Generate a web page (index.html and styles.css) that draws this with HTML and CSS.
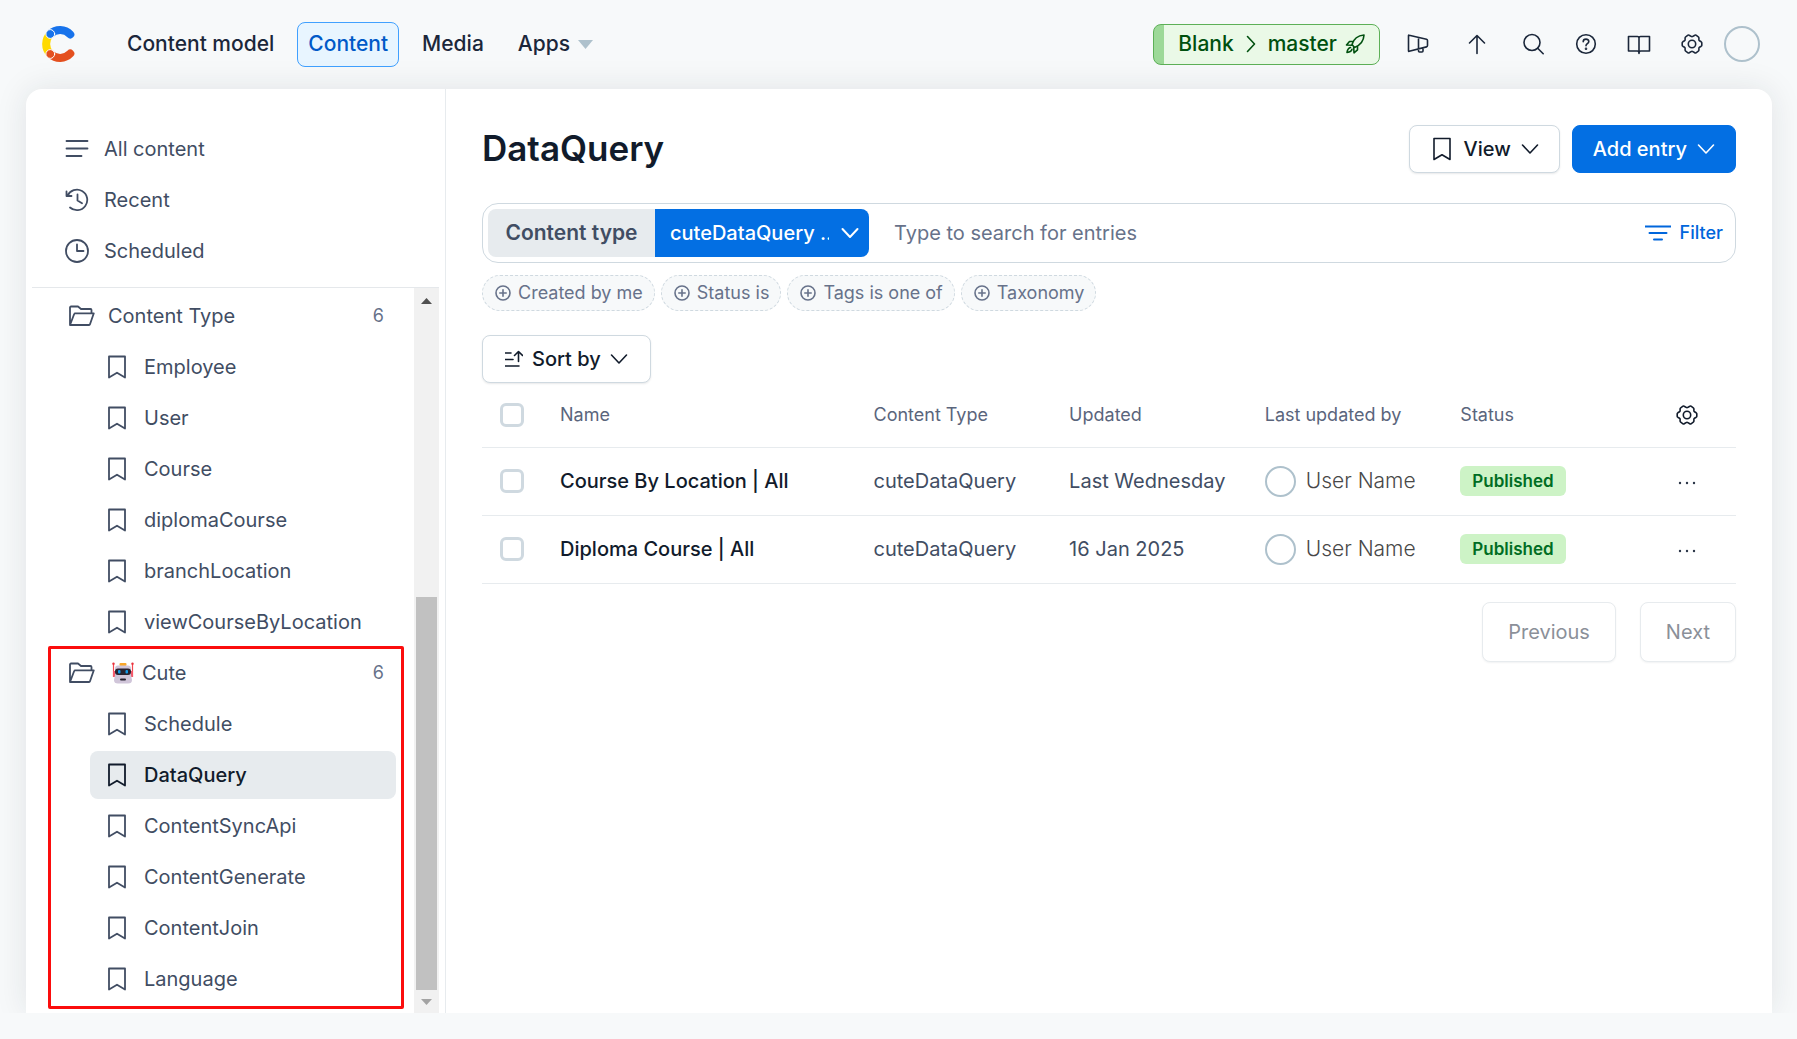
FILE: index.html
```html
<!DOCTYPE html>
<html lang="en">
<head>
<meta charset="utf-8">
<title>DataQuery - Content</title>
<link rel="stylesheet" href="styles.css">
</head>
<body>
<svg class="sprite" aria-hidden="true">
  <symbol id="i-bookmark" viewBox="0 0 24 24"><path d="M4 1.500h16v21l-8-4.800-8 4.800z"/></symbol>
  <symbol id="i-folder" viewBox="0 0 26 24"><path d="M1 21V3.500a1 1 0 0 1 1-1h7l3 2.500h9.500a1 1 0 0 1 1 1v3M1 21l4.200-11a1 1 0 0 1 1-.7h18.600l-3.800 11a1 1 0 0 1-1 .7z"/></symbol>
  <symbol id="i-down" viewBox="0 0 18 18"><path d="M1.500 5l7.500 8 7.500-8"/></symbol>
  <symbol id="i-plus" viewBox="0 0 16 16"><circle cx="8" cy="8" r="7"/><path d="M8 4.800v6.400M4.800 8h6.400"/></symbol>
  <symbol id="i-gear" viewBox="0 0 24 24"><circle cx="12" cy="12" r="3.700"/><path d="M21.200 9.800q.6.400.6 1v2.400q0 .6-.6 1l-1.700 1q-.6.400-.6 1v1.900q0 .7-.6 1.100l-2.300 1.600q-.6.400-1.200 0l-1.900-1.200q-.9-.5-1.800 0l-1.900 1.200q-.6.400-1.200 0l-2.300-1.600q-.6-.4-.6-1.100v-1.900q0-.6-.6-1l-1.700-1q-.6-.4-.6-1v-2.400q0-.6.6-1l1.700-1q.6-.4.6-1V5.900q0-.7.600-1.100L8 3.200q.6-.4 1.200 0l1.900 1.200q.9.500 1.800 0l1.900-1.200q.6-.4 1.200 0l2.300 1.600q.6.400.6 1.100v1.900q0 .6.600 1z"/></symbol>
</svg>

<header class="topbar">
  <a class="logo" href="#" aria-label="Home">
    <svg width="33" height="36" viewBox="0 0 33 36" fill="none" stroke-width="8" stroke-linecap="round">
      <path d="M8.300 8A14.100 14.100 0 0 0 8.300 28" stroke="#ffda00"/>
      <path d="M8.300 8a14.100 14.100 0 0 1 20 .4" stroke="#1773eb"/>
      <path d="M8.300 28a14.100 14.100 0 0 0 20-.4" stroke="#e4501f"/>
      <circle cx="8.300" cy="8" r="4.400" fill="#1773eb" stroke="#fff" stroke-width="1"/>
      <circle cx="8.300" cy="28" r="4.400" fill="#e4501f" stroke="#fff" stroke-width="1"/>
    </svg>
  </a>
  <nav class="main-nav" aria-label="Main">
    <a class="nav-link" href="#">Content model</a>
    <a class="nav-link nav-link-active" href="#" aria-current="page">Content</a>
    <a class="nav-link" href="#">Media</a>
    <a class="nav-link" href="#">Apps <svg width="15" height="9" viewBox="0 0 15 9"><path d="M0 0h15L7.500 9z" fill="#aec1cc"/></svg></a>
  </nav>
  <button class="env" type="button">
    <span>Blank</span>
    <svg class="icon" width="18" height="18" viewBox="0 0 18 18"><path d="M5.500 1.500L12.500 9l-7 7.500"/></svg>
    <span>master</span>
    <svg class="icon" width="20" height="20" viewBox="0 0 20 20"><path d="M7 10.500C8.500 5.500 12.500 1.500 19 1c-.3 6.500-4.500 10.500-9.500 12.500zM8.500 7.500H4.500L1.500 11l5.500.3M12.500 12v3.800L9 18.800l-.3-5.500M5.500 13.500c-2 .3-3 2-3.500 5 2.800-.3 4.700-1.300 5-3.300"/></svg>
  </button>
  <div class="actions">
    <button class="action action-wide" type="button" aria-label="Announcements"><svg class="icon" width="24" height="24" viewBox="0 0 24 24"><path d="M2.500 3.700q0-.7.700-.5L20.500 7.300q1 .3 1 1.300v5q0 1-1 1.300L3.200 19.300q-.7.200-.7-.5zM12.500 5.500v11.300M12.500 16.800V19q0 1 1 1h2.500q1 0 1-1v-3.200"/></svg></button>
    <button class="action action-wide" type="button" aria-label="Upgrade"><svg class="icon" width="24" height="24" viewBox="0 0 24 24"><path d="M12 21.500v-18M4.500 11L12 3.500l7.500 7.500"/></svg></button>
    <button class="action" type="button" aria-label="Search"><svg class="icon" width="24" height="24" viewBox="0 0 24 24"><circle cx="11" cy="10.500" r="8"/><path d="M16.700 16.200l5.500 5.500"/></svg></button>
    <button class="action" type="button" aria-label="Help"><svg class="icon" width="24" height="24" viewBox="0 0 24 24"><circle cx="12" cy="12" r="9.300"/><path d="M9.200 9.700c0-3.500 5.600-3.300 5.600-.2 0 2.200-2.800 2.200-2.800 4.300"/><circle cx="12" cy="16.700" r=".5"/></svg></button>
    <button class="action" type="button" aria-label="Docs"><svg class="icon" width="24" height="24" viewBox="0 0 24 24"><path d="M12 6q0-1.500 1.500-1.500h9V19h-9Q12 19 12 21.500 12 19 10.500 19h-9V4.500h9Q12 4.500 12 6v15"/></svg></button>
    <button class="action" type="button" aria-label="Settings"><svg class="icon" width="24" height="24"><use href="#i-gear"/></svg></button>
    <button class="avatar avatar-large" type="button" aria-label="Account"></button>
  </div>
</header>

<div class="panel">
  <aside class="sidebar">
    <nav class="quick" aria-label="Content">
      <a class="quick-link" href="#"><svg class="icon" width="24" height="24" viewBox="0 0 24 24"><path d="M1.500 4h21M1.500 11.500h21M1.500 19h15"/></svg>All content</a>
      <a class="quick-link" href="#"><svg class="icon" width="24" height="24" viewBox="0 0 24 24"><path d="M1.500 3.500V8h5M2.500 7.800A10.300 10.300 0 1 1 5 19.500M12.500 6.500v6l4.500 2.700"/></svg>Recent</a>
      <a class="quick-link" href="#"><svg class="icon" width="24" height="24" viewBox="0 0 24 24"><circle cx="12" cy="12" r="11"/><path d="M12 5.500V12h6.500"/></svg>Scheduled</a>
    </nav>
    <div class="views">
      <div class="tree">
        <section class="group">
          <a class="folder" href="#"><svg class="icon" width="26" height="24"><use href="#i-folder"/></svg><span class="folder-name">Content Type</span><span class="count">6</span></a>
          <a class="view" href="#"><svg class="icon" width="24" height="24"><use href="#i-bookmark"/></svg>Employee</a>
          <a class="view" href="#"><svg class="icon" width="24" height="24"><use href="#i-bookmark"/></svg>User</a>
          <a class="view" href="#"><svg class="icon" width="24" height="24"><use href="#i-bookmark"/></svg>Course</a>
          <a class="view" href="#"><svg class="icon" width="24" height="24"><use href="#i-bookmark"/></svg>diplomaCourse</a>
          <a class="view" href="#"><svg class="icon" width="24" height="24"><use href="#i-bookmark"/></svg>branchLocation</a>
          <a class="view" href="#"><svg class="icon" width="24" height="24"><use href="#i-bookmark"/></svg>viewCourseByLocation</a>
        </section>
        <section class="group group-marked">
          <a class="folder" href="#"><svg class="icon" width="26" height="24"><use href="#i-folder"/></svg>
            <svg class="robot" width="28" height="22" viewBox="0 0 28 22">
              <path d="M4.500 1.500V15M23.500 1.500V15" stroke="#f4464e" stroke-width="1.200"/>
              <path d="M4 9h2.500v6H4zM21.500 9H24v6h-2.500z" fill="#f4596b"/>
              <circle cx="4.500" cy="1.700" r="1.200" fill="#e8343f"/><circle cx="23.500" cy="1.700" r="1.200" fill="#e8343f"/>
              <rect x="10.500" y="1" width="7" height="3" rx="1" fill="#f9a72b"/>
              <path d="M9 3.500h10q3 0 3 3V13l1 5q0 3.500-4 3.500H9q-4 0-4-3.500l1-5V6.500q0-3 3-3z" fill="#d0c5d9"/>
              <rect x="6" y="6.500" width="16" height="6.500" rx="3" fill="#272230"/>
              <rect x="9" y="8" width="2.500" height="3.500" rx="1" fill="#139be8"/><rect x="16.500" y="8" width="2.500" height="3.500" rx="1" fill="#139be8"/>
              <rect x="11" y="16.500" width="6" height="2" rx="1" fill="#272230"/>
            </svg>
            <span class="folder-name">Cute</span><span class="count">6</span></a>
          <a class="view" href="#"><svg class="icon" width="24" height="24"><use href="#i-bookmark"/></svg>Schedule</a>
          <a class="view view-active" href="#" aria-current="page"><svg class="icon" width="24" height="24"><use href="#i-bookmark"/></svg>DataQuery</a>
          <a class="view" href="#"><svg class="icon" width="24" height="24"><use href="#i-bookmark"/></svg>ContentSyncApi</a>
          <a class="view" href="#"><svg class="icon" width="24" height="24"><use href="#i-bookmark"/></svg>ContentGenerate</a>
          <a class="view" href="#"><svg class="icon" width="24" height="24"><use href="#i-bookmark"/></svg>ContentJoin</a>
          <a class="view" href="#"><svg class="icon" width="24" height="24"><use href="#i-bookmark"/></svg>Language</a>
        </section>
      </div>
      <div class="scrollbar" aria-hidden="true">
        <svg width="11" height="6" viewBox="0 0 11 6"><path d="M0 6L5.500 0 11 6z" fill="#505050"/></svg>
        <div class="scroll-thumb"></div>
        <svg width="11" height="6" viewBox="0 0 11 6"><path d="M0 0l5.500 6L11 0z" fill="#a3a3a3"/></svg>
      </div>
    </div>
  </aside>

  <main class="main">
    <div class="title-row">
      <h1 class="title">DataQuery</h1>
      <button class="button" type="button"><svg class="icon" width="24" height="24"><use href="#i-bookmark"/></svg>View<svg class="icon" width="18" height="18"><use href="#i-down"/></svg></button>
      <button class="button button-primary" type="button">Add entry<svg class="icon" width="18" height="18"><use href="#i-down"/></svg></button>
    </div>

    <form class="search">
      <label class="search-label" for="type">Content type</label>
      <div class="select-wrap">
        <select class="select" id="type"><option>cuteDataQuery ..</option></select>
        <svg class="icon select-arrow" width="18" height="18"><use href="#i-down"/></svg>
      </div>
      <input class="search-input" type="text" placeholder="Type to search for entries" aria-label="Search for entries">
      <button class="filter" type="button"><svg class="icon" width="26" height="18" viewBox="0 0 26 18"><path d="M0 2.500h26M4.500 9h17M9 15.500h8"/></svg>Filter</button>
    </form>

    <div class="pills">
      <button class="pill" type="button"><svg class="icon" width="16" height="16"><use href="#i-plus"/></svg>Created by me</button>
      <button class="pill" type="button"><svg class="icon" width="16" height="16"><use href="#i-plus"/></svg>Status is</button>
      <button class="pill" type="button"><svg class="icon" width="16" height="16"><use href="#i-plus"/></svg>Tags is one of</button>
      <button class="pill" type="button"><svg class="icon" width="16" height="16"><use href="#i-plus"/></svg>Taxonomy</button>
    </div>

    <button class="button button-sort" type="button"><svg class="icon" width="18" height="18" viewBox="0 0 18 18"><path d="M0 3h6M0 9.500h8M0 16h14M13.500 11.500V2M9.500 5.500l4-4 4 4"/></svg>Sort by<svg class="icon" width="18" height="18"><use href="#i-down"/></svg></button>

    <table class="entries">
      <colgroup><col class="col-check"><col class="col-name"><col class="col-data"><col class="col-data"><col class="col-data"><col class="col-data"><col></colgroup>
      <thead>
        <tr>
          <th><input class="check" type="checkbox" aria-label="Select all"></th>
          <th>Name</th><th>Content Type</th><th>Updated</th><th>Last updated by</th><th>Status</th>
          <th class="cell-menu"><button class="plain" type="button" aria-label="Columns"><svg class="icon" width="24" height="24"><use href="#i-gear"/></svg></button></th>
        </tr>
      </thead>
      <tbody>
        <tr>
          <td><input class="check" type="checkbox" aria-label="Select Course By Location"></td>
          <td class="cell-name">Course By Location | All</td><td>cuteDataQuery</td><td>Last Wednesday</td>
          <td><div class="user"><span class="avatar"></span>User Name</div></td>
          <td><span class="badge">Published</span></td>
          <td class="cell-menu"><button class="plain" type="button" aria-label="Entry actions"><svg width="18" height="18" viewBox="0 0 18 18" fill="#2c3648"><circle cx="2" cy="9" r="1.200"/><circle cx="9" cy="9" r="1.200"/><circle cx="16" cy="9" r="1.200"/></svg></button></td>
        </tr>
        <tr>
          <td><input class="check" type="checkbox" aria-label="Select Diploma Course"></td>
          <td class="cell-name">Diploma Course | All</td><td>cuteDataQuery</td><td>16 Jan 2025</td>
          <td><div class="user"><span class="avatar"></span>User Name</div></td>
          <td><span class="badge">Published</span></td>
          <td class="cell-menu"><button class="plain" type="button" aria-label="Entry actions"><svg width="18" height="18" viewBox="0 0 18 18" fill="#2c3648"><circle cx="2" cy="9" r="1.200"/><circle cx="9" cy="9" r="1.200"/><circle cx="16" cy="9" r="1.200"/></svg></button></td>
        </tr>
      </tbody>
    </table>

    <div class="pager">
      <button class="button button-page" type="button" disabled>Previous</button>
      <button class="button button-page" type="button" disabled>Next</button>
    </div>
  </main>
</div>
</body>
</html>
```
FILE: styles.css
```css
*, *::before, *::after { box-sizing: border-box; }

body {
  margin: 0;
  min-height: 100vh;
  display: flex;
  flex-direction: column;
  background: #f7f9fa;
  color: #414d63;
  font-family: Inter, "Liberation Sans", sans-serif;
  font-size: 20px;
  line-height: 24px;
}

a { color: inherit; text-decoration: none; }
button, input, select { font: inherit; color: inherit; }
button { padding: 0; border: 0; background: none; white-space: nowrap; }
svg { display: block; flex: none; }

.sprite { position: absolute; width: 0; height: 0; }
.icon {
  fill: none;
  stroke: currentColor;
  stroke-width: 1.6;
  stroke-linecap: round;
  stroke-linejoin: round;
}

/* Top bar */
.topbar {
  display: flex;
  align-items: center;
  height: 89px;
  padding: 0 37px 1px 42px;
  color: #1b273a;
  font-size: 21px;
}
.main-nav {
  display: flex;
  gap: 12px;
  margin: 0 auto 0 41px;
  font-weight: 500;
}
.nav-link {
  display: flex;
  align-items: center;
  gap: 8px;
  height: 45px;
  padding: 0 10px;
  border: 1px solid transparent;
  border-radius: 8px;
}
.nav-link-active {
  border-color: #40a0ff;
  background: #e8f5ff;
  color: #0059c8;
}
.env {
  display: flex;
  align-items: center;
  gap: 8px;
  height: 41px;
  margin-right: 8px;
  padding: 0 14px 0 24px;
  border: 1px solid #5db057;
  border-radius: 8px;
  background: linear-gradient(to right, #9dd998 10px, #eaf9e7 10px);
  color: #00500f;
  font-weight: 500;
}
.actions { display: flex; align-items: center; }
.action { display: flex; justify-content: center; width: 53px; }
.action-wide { width: 59px; }
.avatar {
  flex: none;
  width: 31px;
  height: 31px;
  border: 2px solid #aec1cc;
  border-radius: 50%;
}
.avatar-large { width: 36px; height: 36px; margin-left: 6px; }

/* Page panel */
.panel {
  flex: 1;
  display: flex;
  margin: 0 25px 26px 26px;
  border-radius: 16px 16px 0 0;
  background: #fff;
  box-shadow: 0 0 32px rgba(25, 37, 50, 0.1);
  clip-path: inset(-40px -40px 0 -40px);
}

/* Sidebar */
.sidebar {
  flex: none;
  display: flex;
  flex-direction: column;
  width: 420px;
  padding: 36px 6px 0;
  border-right: 1px solid #e7ebee;
}
.sidebar .icon { stroke-width: 1.8; }
.quick {
  display: flex;
  flex-direction: column;
  gap: 3px;
  padding-bottom: 12px;
  border-bottom: 1px solid #e5e8eb;
}
.quick-link {
  display: flex;
  align-items: center;
  gap: 15px;
  height: 48px;
  padding-left: 33px;
}
.views { flex: 1; display: flex; }
.tree { flex: 1; padding: 4px 10px 10px 16px; }
.group {
  display: flex;
  flex-direction: column;
  gap: 3px;
  margin-bottom: 3px;
}
.group-marked { position: relative; margin-bottom: 0; }
.group-marked::after {
  content: "";
  position: absolute;
  inset: -3px 0 -6px;
  border: 3px solid #fb0d0d;
  border-radius: 2px;
  pointer-events: none;
}
.folder {
  display: flex;
  align-items: center;
  height: 48px;
  padding: 0 20px 0 21px;
}
.folder-name { margin-left: 13px; }
.robot { margin-left: 14px; }
.robot + .folder-name { margin-left: 5px; }
.count { margin-left: auto; color: #67728a; font-size: 18px; }
.view {
  display: flex;
  align-items: center;
  gap: 15px;
  height: 48px;
  margin: 0 8px 0 42px;
  padding-left: 15px;
  border-radius: 8px;
}
.view-active { background: #e7ebee; color: #111b2b; font-weight: 500; }
.scrollbar {
  display: flex;
  flex-direction: column;
  align-items: center;
  justify-content: space-between;
  width: 25px;
  padding: 10px 2px 8px;
  background: #f1f1f1;
}
.scroll-thumb {
  width: 21px;
  height: 393px;
  margin: auto 0 9px;
  background: #c1c1c1;
}

/* Main column */
.main {
  flex: 1;
  display: flex;
  flex-direction: column;
  min-width: 0;
  padding: 36px;
}
.title-row { display: flex; align-items: center; gap: 12px; height: 48px; }
.title {
  margin: 0 auto 0 0;
  padding-bottom: 2px;
  color: #111b2b;
  font-size: 35px;
  font-weight: 600;
  line-height: 46px;
}
.button {
  display: flex;
  align-items: center;
  justify-content: center;
  gap: 10px;
  height: 48px;
  padding: 0 20px;
  border: 1px solid #cfd9e0;
  border-radius: 8px;
  background: #fff;
  box-shadow: 0 1px 2px rgba(25, 37, 50, 0.1);
  color: #111b2b;
  font-weight: 500;
}
.button-primary {
  border-color: #036fe3;
  background: #036fe3;
  box-shadow: none;
  color: #fff;
}
.button-sort { align-self: flex-start; gap: 9px; margin-top: 24px; padding: 0 22px; }

.search {
  display: flex;
  align-items: center;
  height: 60px;
  margin-top: 30px;
  padding: 5px;
  border: 1px solid #cfd9e0;
  border-radius: 16px;
}
.search-label {
  width: 167px;
  border-radius: 8px 0 0 8px;
  background: #e7ebee;
  font-size: 21px;
  font-weight: 600;
  line-height: 48px;
  text-align: center;
}
.select-wrap { position: relative; width: 214px; }
.select {
  width: 100%;
  height: 48px;
  padding: 0 40px 0 15px;
  border: 0;
  border-radius: 0 8px 8px 0;
  background: #036fe3;
  color: #fff;
  font-weight: 500;
  appearance: none;
}
.select-arrow {
  position: absolute;
  top: 15px;
  right: 10px;
  stroke-width: 2;
  color: #fff;
  pointer-events: none;
}
.search-input {
  flex: 1;
  min-width: 0;
  height: 48px;
  padding: 0 25px;
  border: 0;
  background: none;
  outline: 0;
}
.search-input::placeholder { color: #67728a; opacity: 1; }
.filter {
  display: flex;
  align-items: center;
  gap: 9px;
  padding-right: 7px;
  color: #0066dc;
  font-size: 18px;
  font-weight: 500;
}
.filter .icon { stroke-width: 2; }

.pills { display: flex; gap: 6px; margin-top: 12px; }
.pill {
  display: flex;
  align-items: center;
  gap: 7px;
  height: 36px;
  padding: 0 11px 0 12px;
  border: 1px dashed #cfd9e0;
  border-radius: 18px;
  background: #f7f9fa;
  color: #67728a;
  font-size: 18px;
}

/* Entries */
.entries {
  width: 100%;
  table-layout: fixed;
  border-collapse: collapse;
}
.col-check { width: 62px; }
.col-name { width: 25%; }
.col-data { width: 15.6%; }
.entries th, .entries td {
  height: 68px;
  padding: 0 16px;
  border-bottom: 1px solid #e7ebee;
  text-align: left;
  white-space: nowrap;
}
.entries th {
  height: 64px;
  color: #5a657c;
  font-size: 18px;
  font-weight: 400;
}
.entries .cell-name { color: #111b2b; font-weight: 500; }
.entries .cell-menu { padding: 0 18px 0 16px; text-align: center; }
.check {
  display: block;
  width: 24px;
  height: 24px;
  margin: 0 0 0 2px;
  border: 3px solid #cfd9e0;
  border-radius: 6px;
  background: #fff;
  appearance: none;
}
.plain { display: inline-block; vertical-align: middle; color: #111b2b; }
.user {
  display: flex;
  align-items: center;
  gap: 10px;
  color: #484848;
  font-size: 21px;
  font-weight: 300;
}
.badge {
  display: inline-block;
  padding: 0 12px;
  border-radius: 6px;
  background: #cdf3c6;
  color: #006d23;
  font-size: 17px;
  font-weight: 600;
  line-height: 30px;
  vertical-align: middle;
}
.pager {
  display: flex;
  justify-content: flex-end;
  gap: 24px;
  margin-top: 18px;
}
.button-page {
  height: 60px;
  padding: 0 25px;
  border-color: #e7ebee;
  box-shadow: 0 1px 2px rgba(25, 37, 50, 0.06);
  color: #8b9099;
  font-weight: 400;
}
```
